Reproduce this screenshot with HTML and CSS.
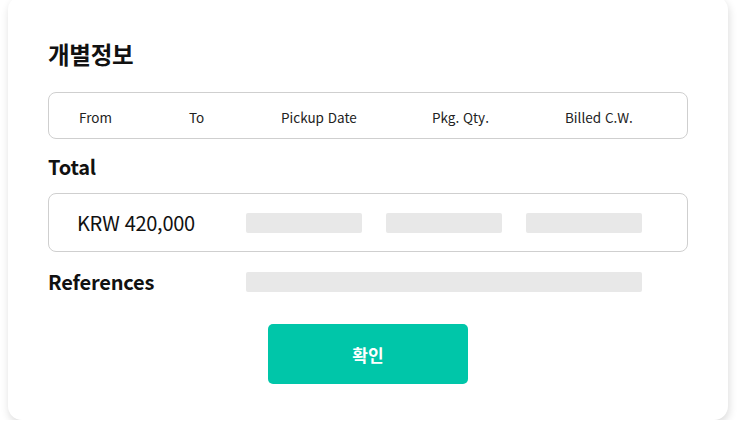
FILE: index.html
```html
<!DOCTYPE html>
<html lang="ko">
<head>
<meta charset="utf-8">
<title>개별정보</title>
<link rel="stylesheet" href="styles.css">
</head>
<body>
<div class="card">
  <h1 class="title">개별정보</h1>
  <div class="head-box">
    <span>From</span>
    <span>To</span>
    <span>Pickup Date</span>
    <span>Pkg. Qty.</span>
    <span>Billed C.W.</span>
  </div>
  <h2 class="label total-label">Total</h2>
  <div class="total-box">
    <span class="amount">KRW 420,000</span>
    <span class="bar"></span>
    <span class="bar"></span>
    <span class="bar"></span>
  </div>
  <div class="ref-row">
    <h2 class="label">References</h2>
    <span class="bar wide"></span>
  </div>
  <div class="actions">
    <button class="confirm">확인</button>
  </div>
</div>
</body>
</html>
```

FILE: styles.css
```css
* { box-sizing: border-box; }
html, body { margin: 0; padding: 0; background: #fff; }
body {
  font-family: "Noto Sans CJK KR", "Noto Sans", sans-serif;
  color: #111;
  overflow: hidden;
}
.card {
  margin: -4px 0 0 8px;
  width: 720px;
  height: 424px;
  background: #fff;
  border-radius: 14px;
  box-shadow: 1px 4px 8px rgba(0,0,0,0.14);
  padding: 42px 40px 0 40px;
}
.title {
  margin: 0;
  font-size: 23.5px;
  font-weight: 700;
  line-height: 32px;
  height: 32px;
  letter-spacing: -0.3px;
}
.head-box {
  margin-top: 22px;
  height: 47px;
  border: 1px solid #cfcfcf;
  border-radius: 8px;
  display: grid;
  grid-template-columns: 110px 92px 151px 133px auto;
  align-items: center;
  padding-left: 30px;
  padding-top: 2px;
  font-size: 13.5px;
  color: #222;
}
.label {
  margin: 0;
  font-size: 20px;
  font-weight: 700;
  line-height: 28px;
  letter-spacing: -0.2px;
}
.total-label { margin-top: 14px; }
.total-box {
  margin-top: 12px;
  height: 59px;
  border: 1px solid #cfcfcf;
  border-radius: 8px;
  display: flex;
  align-items: center;
  padding-left: 28px;
}
.amount {
  width: 169px;
  font-size: 20px;
  letter-spacing: -0.3px;
  color: #111;
}
.bar {
  display: block;
  width: 116px;
  height: 20px;
  background: #e8e8e8;
  border-radius: 2px;
  margin-right: 24px;
}
.ref-row {
  margin-top: 19px;
  display: flex;
  align-items: center;
  height: 22px;
}
.ref-row .label { width: 198px; }
.bar.wide { width: 396px; margin-right: 0; }
.actions {
  margin-top: 31px;
  display: flex;
  justify-content: center;
}
.confirm {
  width: 200px;
  height: 60px;
  border: none;
  border-radius: 5px;
  background: #00c6a9;
  color: #fff;
  font-family: inherit;
  font-size: 17px;
  font-weight: 700;
}
```
